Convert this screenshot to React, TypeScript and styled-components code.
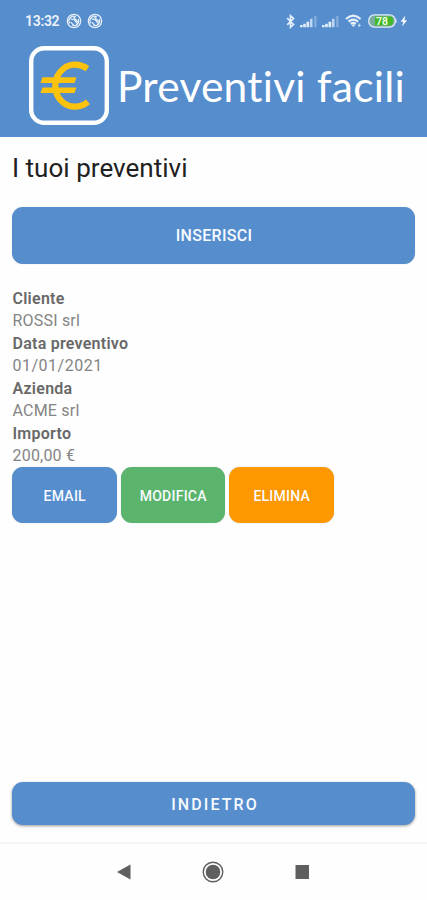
import React from 'react';
import styled, { createGlobalStyle } from 'styled-components';

const GlobalStyle = createGlobalStyle`
  * { box-sizing: border-box; }
  body { margin: 0; background: #fefefe; font-family: Roboto, sans-serif; }
`;

const Screen = styled.div`
  width: 427px;
  height: 900px;
  display: flex;
  flex-direction: column;
  background: #fefefe;
  overflow: hidden;
`;

const Header = styled.header`
  height: 137px;
  background: #558dcd;
  color: #fff;
  flex: none;
`;

const StatusBar = styled.div`
  height: 46px;
  padding: 0 19px 4px 25px;
  display: flex;
  align-items: center;
  justify-content: space-between;
`;

const StatusGroup = styled.div`
  display: flex;
  align-items: center;
`;

const Clock = styled.span`
  width: 41px;
  font-size: 14px;
  line-height: 16px;
  font-weight: 600;
  letter-spacing: -0.3px;
  color: #edf4fc;
`;

const Icon = styled.svg<{ $gap?: number }>`
  display: block;
  flex: none;
  margin-left: ${({ $gap = 0 }) => $gap}px;
`;

const Brand = styled.div`
  display: flex;
  padding-left: 29px;
  height: 79px;
  align-items: center;
`;

const BrandName = styled.span`
  margin-left: 8px;
  font-family: Lato, sans-serif;
  font-size: 42.5px;
  line-height: 50px;
  font-weight: 400;
  letter-spacing: 0.23px;
  white-space: nowrap;
`;

const Content = styled.main`
  flex: 1;
  padding: 0 12px 17px;
  display: flex;
  flex-direction: column;
`;

const Title = styled.h1`
  margin: 15px 0 22.5px;
  font-size: 26px;
  line-height: 32px;
  font-weight: 400;
  letter-spacing: 0.03px;
  color: #202020;
  white-space: nowrap;
`;

const Button = styled.button<{ $tone?: string }>`
  width: 100%;
  height: 57px;
  padding: 2px 0 0 1px;
  border: 0;
  border-radius: 11px;
  background: ${({ $tone = '#558dcd' }) => $tone};
  color: #f7faff;
  font-family: Roboto, sans-serif;
  font-size: 16px;
  line-height: 20px;
  font-weight: 500;
  letter-spacing: 0.3px;
  flex: none;
  box-shadow: 0 0 1px rgba(50, 80, 120, 0.4);
`;

const ActionButton = styled(Button)`
  width: 104.5px;
  height: 56px;
  font-size: 14px;
  letter-spacing: 0.25px;
`;

const BackButton = styled(Button)`
  height: 43px;
  margin-top: auto;
  padding-left: 3px;
  letter-spacing: 2.1px;
  box-shadow: 0 1px 3px rgba(0, 0, 0, 0.4);
`;

const Details = styled.dl`
  margin: 24.2px 0 -1px;
  padding-left: 0.5px;
  font-size: 16px;
  line-height: 22.5px;
  color: #848484;
`;

const Label = styled.dt`
  font-weight: 600;
  letter-spacing: 0.25px;
  color: #686868;
`;

const Value = styled.dd<{ $spacing?: number }>`
  margin: 0;
  font-weight: 400;
  letter-spacing: ${({ $spacing = 0.2 }) => $spacing}px;
`;

const Actions = styled.div`
  display: flex;
  gap: 4px;
`;

const SystemNav = styled.nav`
  height: 58px;
  border-top: 2px solid #f6f6f6;
  padding: 0 117px 0 116px;
  display: flex;
  align-items: center;
  justify-content: space-between;
  color: #5f5f5f;
`;

const Logo = () => (
  <Icon width="80" height="79" viewBox="0 0 80 79" fill="none">
    <rect x="2.2" y="2.2" width="75.6" height="74.6" rx="13" stroke="#fff" strokeWidth="4.4" />
    <path d="M58.5 22.6C51 17.6 41.5 17 34.5 22.6C23.5 31.3 23.5 48.2 34.5 56.9C41.5 62.4 51.5 61.8 59 55.8" stroke="#fdc20b" strokeWidth="6.2" />
    <path d="M13.5 31.2h34l-2 5.8h-34zM13.5 41.4h34l-2 5.6h-34z" fill="#fdc20b" />
  </Icon>
);

const NoticeIcon = ({ gap }: { gap: number }) => (
  <Icon $gap={gap} width="16" height="16" viewBox="0 0 16 16" fill="none" stroke="#e8f1fb">
    <circle cx="8" cy="8" r="6.7" strokeWidth="1.2" />
    <path d="M3.7 10.3A4.5 4.5 0 0 1 9.8 4M12.2 6a4.5 4.5 0 0 1-6.1 6M4.8 6.2l3.1.1 3.8 4.7M7.6 4.2l4.2 4.6M4.7 9.3l3 2.6" strokeWidth="1.2" />
  </Icon>
);

const SignalIcon = ({ gap }: { gap: number }) => (
  <Icon $gap={gap} width="17" height="13" viewBox="0 0 17 13" fill="#e3eefb">
    <path d="M0 10h2.6v2.2H0zM3.2 8.7h2.6v3.5H3.2zM6.5 6.8h2.7v5.4H6.5z" />
    <path d="M10 3.8h2.5v8.4H10z" opacity=".75" />
    <path d="M14.2.8h2.3v11.4h-2.3z" opacity=".35" />
  </Icon>
);

const BluetoothIcon = () => (
  <Icon width="9" height="15" viewBox="0 0 9 15" fill="none" stroke="#e3eefb" strokeWidth="1.7">
    <path d="M1.2 4.2L7.5 10.5 4.5 13.3V1.7L7.5 4.5 1.2 10.8" />
  </Icon>
);

const WifiIcon = () => (
  <Icon $gap={6} width="18" height="14" viewBox="0 0 18 14" fill="none" stroke="#e8f1fb" strokeWidth="2.1">
    <path d="M1 5.1q7.3-6.8 14.6 0M3.5 7.6q4.8-4 9.6 0M5.8 9.8q2.5-1.9 5 0" />
    <path d="M6.2 10.5h4.2l-2.1 2.6z" fill="#e8f1fb" stroke="none" />
    <path d="M14.2 9.5v3.5M13 11.4h2.8" strokeWidth="1" opacity=".8" />
  </Icon>
);

const BatteryIcon = () => (
  <Icon $gap={5} width="29" height="14" viewBox="0 0 29 14">
    <rect x=".8" y=".9" width="26.4" height="12.2" rx="5.5" fill="#79ab9f" stroke="#e1edf9" strokeWidth="1.3" />
    <path d="M7 2.4h14.5q3.8 0 3.8 4.6t-3.8 4.6H7z" fill="#44b927" />
    <path d="M28 5v4" stroke="#d9e9f8" />
    <text x="14" y="11" textAnchor="middle" fill="#f1ffe9" fontFamily="Roboto, sans-serif" fontSize="10.5" fontWeight="600">78</text>
  </Icon>
);

const ChargeIcon = () => (
  <Icon $gap={3} width="8" height="12" viewBox="0 0 8 12" fill="#f4f8ff">
    <path d="M5.3.5L.6 6.7h2.7L2 11.5l5.2-6.3H4.6z" />
  </Icon>
);

export default function App() {
  return (
    <Screen>
      <GlobalStyle />
      <Header>
        <StatusBar>
          <StatusGroup>
            <Clock>13:32</Clock>
            <NoticeIcon gap={0} />
            <NoticeIcon gap={5} />
          </StatusGroup>
          <StatusGroup>
            <BluetoothIcon />
            <SignalIcon gap={5} />
            <SignalIcon gap={5} />
            <WifiIcon />
            <BatteryIcon />
            <ChargeIcon />
          </StatusGroup>
        </StatusBar>
        <Brand>
          <Logo />
          <BrandName>Preventivi facili</BrandName>
        </Brand>
      </Header>
      <Content>
        <Title>I tuoi preventivi</Title>
        <Button>INSERISCI</Button>
        <Details>
          <Label>Cliente</Label>
          <Value>ROSSI srl</Value>
          <Label>Data preventivo</Label>
          <Value $spacing={0.5}>01/01/2021</Value>
          <Label>Azienda</Label>
          <Value>ACME srl</Value>
          <Label>Importo</Label>
          <Value>200,00 €</Value>
        </Details>
        <Actions>
          <ActionButton>EMAIL</ActionButton>
          <ActionButton $tone="#5bb46b">MODIFICA</ActionButton>
          <ActionButton $tone="#fe9800">ELIMINA</ActionButton>
        </Actions>
        <BackButton>INDIETRO</BackButton>
      </Content>
      <SystemNav>
        <Icon width="16" height="16" viewBox="0 0 16 16" fill="currentColor">
          <path d="M1 8L14.5.5v15z" />
        </Icon>
        <Icon width="22" height="22" viewBox="0 0 22 22">
          <circle cx="11" cy="11" r="9.8" fill="none" stroke="currentColor" strokeWidth="1.4" />
          <circle cx="11" cy="11" r="7.3" fill="currentColor" />
        </Icon>
        <Icon width="16" height="16" viewBox="0 0 16 16" fill="currentColor">
          <path d="M1.5 1h13.5v14H1.5z" />
        </Icon>
      </SystemNav>
    </Screen>
  );
}
